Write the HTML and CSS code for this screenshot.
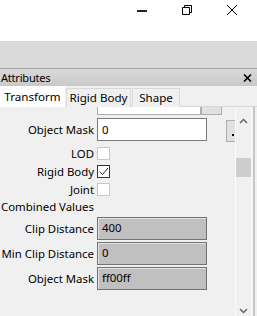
FILE: index.html
```html
<!doctype html>
<html lang="en">
<head>
    <meta charset="UTF-8">
    <title>Attributes</title>
    <link rel="stylesheet" href="styles.css">
</head>
<body>
<header class="titlebar">
    <span class="win-btn"><i class="min-bar"></i></span>
    <span class="win-btn">
        <svg width="10" height="10" viewBox="0 0 10 10" fill="none" stroke="#000" stroke-width="1"><path d="M0.5 2.5h7v7h-7z"/><path d="M2.5 2.5v-2h7v7h-2"/></svg>
    </span>
    <span class="win-btn">
        <svg width="10" height="10" viewBox="0 0 10 10" fill="none" stroke="#000" stroke-width="1"><path d="M0 0l10 10M10 0l-10 10"/></svg>
    </span>
</header>

<div class="toolbar"></div>

<section class="panel">
    <div class="panel-head">
        <span>Attributes</span>
        <svg class="close" width="9" height="8" viewBox="0 0 9 8"><path d="M1 0.5l7 7M8 0.5l-7 7" stroke="#000" stroke-width="1.6"/></svg>
    </div>

    <div class="tabs">
        <span class="tab active">Transform</span>
        <span class="tab">Rigid Body</span>
        <span class="tab shape">Shape</span>
    </div>

    <div class="tab-body">
        <div class="form">
            <div class="row partial">
                <label></label>
                <span class="field short"></span>
                <span class="mini-btn"></span>
            </div>
            <div class="row">
                <label>Object Mask</label>
                <span class="field">0</span>
                <span class="dots-btn"><i></i></span>
            </div>
            <div class="row check">
                <label>LOD</label>
                <span class="box"></span>
            </div>
            <div class="row check">
                <label>Rigid Body</label>
                <span class="box on">
                    <svg width="11" height="11" viewBox="0 0 11 11"><path d="M1.5 5.5l3 3 5.5-6.5" fill="none" stroke="#222" stroke-width="1"/></svg>
                </span>
            </div>
            <div class="row check">
                <label>Joint</label>
                <span class="box"></span>
            </div>
            <div class="group">Combined Values</div>
            <div class="row ro">
                <label>Clip Distance</label>
                <span class="field">400</span>
            </div>
            <div class="row ro">
                <label>Min Clip Distance</label>
                <span class="field">0</span>
            </div>
            <div class="row ro">
                <label>Object Mask</label>
                <span class="field">ff00ff</span>
            </div>
        </div>

        <div class="scrollbar">
            <svg class="arrow" width="9" height="6" viewBox="0 0 9 6"><path d="M1 5l3.5-3.5 3.5 3.5" fill="none" stroke="#606060" stroke-width="1.4"/></svg>
            <div class="thumb"></div>
            <svg class="arrow down" width="9" height="6" viewBox="0 0 9 6"><path d="M1 1l3.5 3.5 3.5-3.5" fill="none" stroke="#606060" stroke-width="1.4"/></svg>
        </div>
        <div class="edge"></div>
    </div>
</section>
</body>
</html>
```

FILE: styles.css
```css
*{
    box-sizing: border-box;
}
html, body{
    margin: 0;
    height: 100%;
}
body{
    width: 257px;
    height: 316px;
    overflow: hidden;
    font-family: "Noto Sans", "Open Sans", sans-serif;
    font-size: 11.4px;
    color: #000;
    background: #fff;
    display: flex;
    flex-direction: column;
}

/* window title bar */
.titlebar{
    height: 41px;
    flex: none;
    background: #fff;
    display: flex;
    justify-content: flex-end;
    align-items: flex-start;
    padding-top: 5px;
    padding-right: 20px;
    gap: 35px;
}
.win-btn{
    width: 10px;
    height: 10px;
    display: flex;
    align-items: flex-start;
    flex: none;
}
.min-bar{
    display: block;
    width: 11px;
    height: 2px;
    margin-top: 5px;
    background: #222;
}

.toolbar{
    height: 28px;
    flex: none;
    background: #dadada;
    border-bottom: 1px solid #a6a6a6;
}

/* attributes panel */
.panel{
    flex: 1;
    display: flex;
    flex-direction: column;
    background: #f0f0f0;
}
.panel-head{
    height: 17px;
    flex: none;
    background: linear-gradient(#d9d9d9, #c9c9c9);
    display: flex;
    justify-content: space-between;
    align-items: center;
    padding: 0 5px 0 1px;
    font-size: 11px;
    letter-spacing: -0.2px;
}
.panel-head .close{
    margin-top: 1px;
}

.tabs{
    height: 21px;
    flex: none;
    display: flex;
    align-items: flex-end;
    gap: 1px;
    position: relative;
    z-index: 1;
    margin-bottom: -1px;
}
.tab{
    width: 65px;
    height: 19px;
    border: 1px solid #d9d9d9;
    border-bottom: none;
    background: #f0f0f0;
    font-size: 11.6px;
    line-height: 17px;
    text-align: center;
}
.tab.shape{
    width: 48px;
}
.tab.active{
    height: 21px;
    background: #fff;
    border-color: #fff;
    line-height: 20px;
}

.tab-body{
    flex: 1;
    display: flex;
    border-top: 1px solid #d9d9d9;
    overflow: hidden;
}
.form{
    flex: 1;
    display: flex;
    flex-direction: column;
}

.row{
    display: flex;
    align-items: center;
    height: 23px;
    gap: 3px;
    flex: none;
}
.row label{
    width: 94px;
    text-align: right;
    white-space: nowrap;
}
.field{
    width: 110px;
    height: 23px;
    border: 1px solid #7a7a7a;
    background: #fff;
    padding-left: 4px;
    line-height: 21px;
}
.row.partial{
    height: 8px;
    align-items: flex-end;
    overflow: hidden;
}
.field.short{
    width: 104px;
    border-color: #adadad;
    flex: none;
}
.mini-btn{
    width: 21px;
    height: 23px;
    flex: none;
    border: 1px solid #adadad;
    background: #e1e1e1;
    margin-left: -3px;
}
.row + .row{
    margin-top: 2px;
}
.row.partial + .row{
    margin-top: 3px;
}
.dots-btn{
    width: 9px;
    height: 22px;
    margin-left: 16px;
    margin-top: 2px;
    border: 1px solid #adadad;
    border-right: none;
    background: #e1e1e1;
    position: relative;
}
.dots-btn i{
    position: absolute;
    left: 5px;
    top: 13px;
    width: 2px;
    height: 2px;
    background: #000;
}

.row.check{
    height: 13px;
}
.row + .row.check{
    margin-top: 5px;
}
.row + .row.check:nth-child(3){
    margin-top: 6px;
}
.box{
    width: 13px;
    height: 13px;
    border: 1px solid #c8c8c8;
    background: #fff;
    display: flex;
    align-items: center;
    justify-content: center;
}
.box.on{
    border-color: #333;
}

.group{
    height: 16px;
    padding-left: 1px;
    margin-top: 3px;
    line-height: 16px;
}
.group + .row{
    margin-top: 2px;
}
.row.ro .field{
    background: #c0c0c0;
    border: 1px solid #727272;
    box-shadow: inset 1px 1px 0 #e4e4e4;
    line-height: 20px;
}

/* scrollbar */
.scrollbar{
    width: 18px;
    margin-right: 1px;
    border-left: 1px solid #fafafa;
    border-right: 1px solid #fafafa;
    background: #f0f0f0;
    display: flex;
    flex-direction: column;
    align-items: center;
    padding-top: 11px;
}
.scrollbar .arrow.down{
    margin-top: auto;
    margin-bottom: 2px;
}
.thumb{
    width: 15px;
    height: 19px;
    background: #cdcdcd;
    margin-top: 34px;
}
.edge{
    width: 2px;
    background: #c8c8c8;
    margin-right: 2px;
}
```
